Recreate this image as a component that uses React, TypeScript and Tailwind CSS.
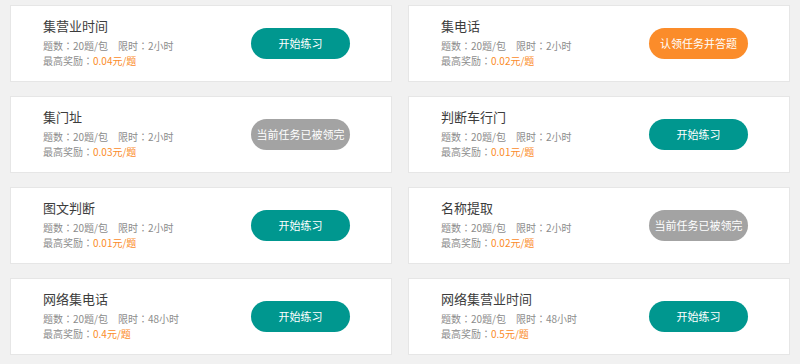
import React from "react";

type Item = {
  title: string;
  limit: string;
  reward: string;
  btn: "start" | "claim" | "done";
};

const items: Item[] = [
  { title: "集营业时间", limit: "2小时", reward: "0.04元/题", btn: "start" },
  { title: "集电话", limit: "2小时", reward: "0.02元/题", btn: "claim" },
  { title: "集门址", limit: "2小时", reward: "0.03元/题", btn: "done" },
  { title: "判断车行门", limit: "2小时", reward: "0.01元/题", btn: "start" },
  { title: "图文判断", limit: "2小时", reward: "0.01元/题", btn: "start" },
  { title: "名称提取", limit: "2小时", reward: "0.02元/题", btn: "done" },
  { title: "网络集电话", limit: "48小时", reward: "0.4元/题", btn: "start" },
  { title: "网络集营业时间", limit: "48小时", reward: "0.5元/题", btn: "start" },
];

function Colon() {
  return <span className="font-['Noto_Sans_CJK_JP',sans-serif]">：</span>;
}

function Btn({ kind }: { kind: Item["btn"] }) {
  if (kind === "start")
    return (
      <button className="w-[99px] h-[31px] rounded-full bg-[#00978f] text-white text-[11px] leading-none shrink-0">
        开始练习
      </button>
    );
  if (kind === "claim")
    return (
      <button className="w-[99px] h-[31px] rounded-full bg-[#fb8c2a] text-white text-[11px] leading-none shrink-0">
        认领任务并答题
      </button>
    );
  return (
    <button className="w-[99px] h-[31px] rounded-full bg-[#a3a3a3] text-white text-[11px] leading-none shrink-0 whitespace-nowrap">
      当前任务已被领完
    </button>
  );
}

export default function App() {
  return (
    <div className="w-[800px] h-[364px] bg-[#f1f1f1] px-[10px] pt-[5px] overflow-hidden font-['Noto_Sans_CJK_SC','Noto_Sans',sans-serif]">
      <div className="grid grid-cols-2 gap-x-[16px] gap-y-[14px]">
        {items.map((it) => (
          <div
            key={it.title}
            className="h-[77px] bg-white border border-[#e6e6e6] flex items-center"
          >
            <div className="w-[240px] pl-[32px] self-start pt-[10px]">
              <div className="text-[13px] leading-[20px] text-[#3c3c3c]">{it.title}</div>
              <div className="mt-[2px] text-[10px] leading-[15px] text-[#8c8c8c] whitespace-nowrap">
                <span className="inline-block w-[75px]">
                  题数<Colon />20题/包
                </span>
                <span>
                  限时<Colon />
                  {it.limit}
                </span>
              </div>
              <div className="text-[10px] leading-[15px] text-[#8c8c8c] whitespace-nowrap">
                最高奖励<Colon />
                <span className="text-[#fb8c2a]">{it.reward}</span>
              </div>
            </div>
            <Btn kind={it.btn} />
          </div>
        ))}
      </div>
    </div>
  );
}
